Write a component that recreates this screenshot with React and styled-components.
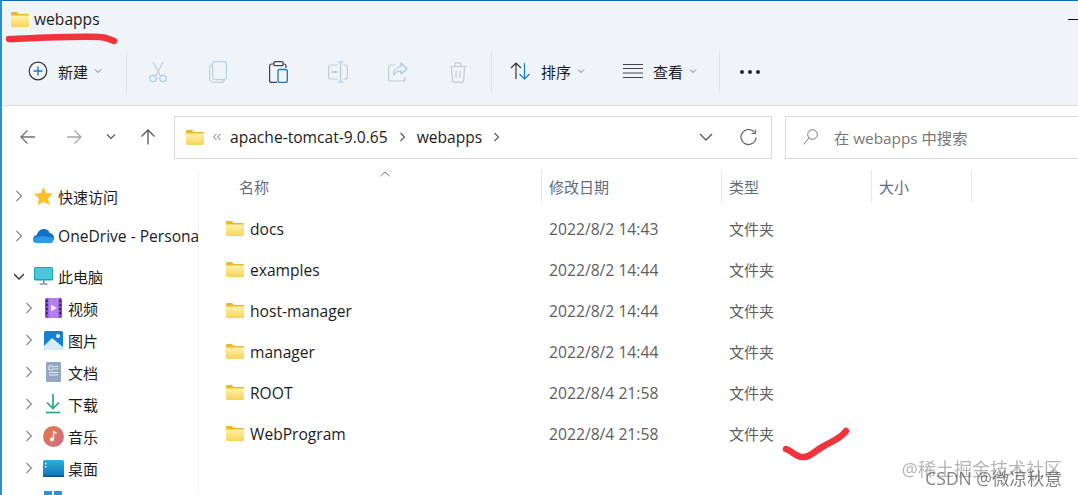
import React from 'react';
import styled, { createGlobalStyle } from 'styled-components';

const FONT = '"Open Sans", "Noto Sans CJK SC", sans-serif';

const GlobalStyle = createGlobalStyle`
  html, body {
    margin: 0;
    padding: 0;
    background: #fff;
    overflow: hidden;
  }
`;

const Window = styled.div`
  position: relative;
  width: 1078px;
  height: 495px;
  box-sizing: border-box;
  overflow: hidden;
  background: #fff;
  border-top: 1px solid #0f6cad;
  border-left: 2px solid #2b8fcb;
  font-family: ${FONT};
  font-size: 15.5px;
  color: #1c1c1c;
`;

const Head = styled.div`
  height: 104px;
  background: #eff4f9;
  border-bottom: 1px solid #d9d9d9;
  border-top-left-radius: 6px;
`;

const TitleBar = styled.div`
  height: 48px;
  display: flex;
  align-items: center;
  gap: 5px;
  padding: 0 0 12px 9px;
  box-sizing: border-box;
  font-size: 15.6px;
`;

const TitleText = styled.span`
  flex: 1;
`;

const Minimize = styled.span`
  width: 22px;
  height: 1px;
  background: #111;
  margin-right: -12px;
`;

const Ribbon = styled.div`
  height: 46px;
  display: flex;
  align-items: center;
`;

const RibbonDivider = styled.div`
  width: 1px;
  height: 41px;
  background: #dfe3e7;
`;

const ToolLabel = styled.button`
  display: flex;
  align-items: center;
  border: 0;
  padding: 0 0 2px;
  margin-left: ${p => p.$left}px;
  width: ${p => p.$width}px;
  background: none;
  font: inherit;
  font-size: 15px;
  color: #1c1c1c;
  gap: 10px;
`;

const ToolChevron = styled.svg`
  margin-left: -4px;
`;

const ToolIcon = styled.button`
  width: 60px;
  height: 40px;
  border: 0;
  padding: 0;
  background: none;
  display: flex;
  align-items: center;
  justify-content: center;
`;

const ToolGroup = styled.div`
  display: flex;
  margin: 0 3px 0 1px;
`;

const More = styled.div`
  display: flex;
  gap: 4px;
  margin-left: 20px;
`;

const Dot = styled.span`
  width: 4px;
  height: 4px;
  border-radius: 50%;
  background: #2a2a2a;
`;

const NavRow = styled.div`
  height: 64px;
  display: flex;
  align-items: center;
  padding-bottom: 2px;
  box-sizing: border-box;
`;

const NavButtons = styled.div`
  width: 172px;
  flex: none;
  display: flex;
  align-items: center;
`;

const NavButton = styled.button`
  width: ${p => p.$width}px;
  border: 0;
  padding: 0;
  background: none;
  display: flex;
  justify-content: center;
`;

const AddressBar = styled.div`
  width: 598px;
  flex: none;
  height: 43px;
  box-sizing: border-box;
  border: 1px solid #d9d9d9;
  display: flex;
  align-items: center;
  padding: 0 10px 0 11px;
  font-size: 15.6px;
`;

const Crumbs = styled.div`
  flex: 1;
  display: flex;
  align-items: center;
  gap: 9px;
`;

const Crumb = styled.span`
  color: #1c1c1c;
`;

const CrumbSepIcon = styled.svg`
  margin: 0 2px;
`;

const AddressActions = styled.div`
  display: flex;
  align-items: center;
  gap: 27px;
  padding-right: 4px;
`;

const SearchBox = styled.div`
  margin-left: 13px;
  width: 320px;
  flex: none;
  height: 43px;
  box-sizing: border-box;
  border: 1px solid #d9d9d9;
  display: flex;
  align-items: center;
  gap: 16px;
  padding-left: 17px;
  color: #767676;
  font-size: 15.3px;
`;

const Body = styled.div`
  display: flex;
  height: 330px;
`;

const Sidebar = styled.nav`
  width: 197px;
  flex: none;
  overflow: hidden;
  border-right: 1px solid #f1f1f1;
  padding-top: 10px;
  box-sizing: border-box;
  white-space: nowrap;
`;

const TreeRow = styled.div`
  height: 32px;
  margin-bottom: ${p => (p.$spaced ? 8 : 0)}px;
  display: flex;
  align-items: center;
  padding-left: ${p => (p.$nested ? 22 : 12)}px;
  font-size: 15px;
`;

const TreeLabel = styled.span`
  font-size: ${p => (p.$latin ? 15.6 : 15)}px;
`;

const TreeChevron = styled.svg`
  flex: none;
  width: 10px;
  height: 12px;
`;

const TreeIcon = styled.span`
  flex: none;
  width: 24px;
  height: 24px;
  margin-left: 7px;
  margin-right: 3px;
  display: flex;
  align-items: center;
  justify-content: center;
`;

const Files = styled.main`
  flex: 1;
`;

const Columns = styled.div`
  display: grid;
  grid-template-columns: 343px 180px 150px 100px;
  height: 33px;
  position: relative;
`;

const SortCaret = styled.svg`
  position: absolute;
  left: 181px;
  top: 1px;
`;

const ColumnHead = styled.div`
  padding-left: ${p => p.$pad}px;
  border-right: 1px solid #e6e6e6;
  display: flex;
  align-items: center;
  font-size: 15px;
  color: #5f6b7a;
`;

const FileList = styled.div`
  padding-top: 5px;
`;

const FileRow = styled.div`
  display: grid;
  grid-template-columns: 342px 180px 150px;
  height: 41px;
  align-items: center;
`;

const FileName = styled.div`
  display: flex;
  align-items: center;
  gap: 6px;
  padding-left: 27px;
  font-size: 15.6px;
`;

const FileMeta = styled.div`
  padding-left: 8px;
  font-size: ${p => p.$size}px;
  color: #5e5e5e;
`;

const Scribble = styled.svg`
  position: absolute;
  left: -2px;
  top: -1px;
  pointer-events: none;
`;

const Watermark = styled.div`
  position: absolute;
  right: 16px;
  bottom: ${p => p.$bottom}px;
  font-size: ${p => p.$size}px;
  color: ${p => p.$color};
  white-space: nowrap;
  filter: blur(0.4px);
`;

const Folder = ({ width = 18, height = 15 }) => (
  <svg width={width} height={height} viewBox="0 0 18 15">
    <defs>
      <linearGradient id="folderFront" x1="0" y1="0" x2="0" y2="1">
        <stop offset="0" stopColor="#fff2b0" />
        <stop offset="1" stopColor="#fbd257" />
      </linearGradient>
    </defs>
    <path d="M0 1.2C0 .5.5 0 1.2 0h4.6l2 2h9c.7 0 1.2.5 1.2 1.2V6H0z" fill="#eeb62c" />
    <path d="M0 3.4h18v10.4c0 .7-.5 1.2-1.2 1.2H1.2C.5 15 0 14.5 0 13.800z" fill="url(#folderFront)" />
  </svg>
);

const SmallChevron = () => (
  <ToolChevron width="8" height="6" viewBox="0 0 8 6">
    <path d="M1 1.500l3 3 3-3" fill="none" stroke="#777" strokeWidth="1" />
  </ToolChevron>
);

const NewIcon = () => (
  <svg width="20" height="20" viewBox="0 0 20 20">
    <circle cx="10" cy="10" r="8.800" fill="none" stroke="#333" strokeWidth="1.200" />
    <path d="M10 5.500v9M5.500 10h9" stroke="#1b78c2" strokeWidth="1.300" />
  </svg>
);

const CutIcon = () => (
  <svg width="20" height="22" viewBox="0 0 20 22">
    <path d="M5 1l7.500 14M15 1L7.500 15" fill="none" stroke="#c3ccd3" strokeWidth="1.200" />
    <circle cx="5" cy="17.500" r="3.200" fill="none" stroke="#a9c8e2" strokeWidth="1.200" />
    <circle cx="15" cy="17.500" r="3.200" fill="none" stroke="#a9c8e2" strokeWidth="1.200" />
  </svg>
);

const CopyIcon = () => (
  <svg width="18" height="22" viewBox="0 0 18 22">
    <rect x="3.600" y=".6" width="13.800" height="18" rx="2.500" fill="none" stroke="#b6d1e8" strokeWidth="1.200" />
    <path d="M3.600 3.500C1.600 4 .6 5 .6 7v10.500c0 2 1.600 3.900 3.900 3.900h8c1.500 0 2.500-1 3-2.800" fill="none" stroke="#c6ced5" strokeWidth="1.200" />
  </svg>
);

const PasteIcon = () => (
  <svg width="19" height="22" viewBox="0 0 19 22">
    <path d="M5 3H2.600C1.400 3 .6 3.800 .6 5v14.400c0 1.200.8 2 2 2H8M14 3h1c1.200 0 2 .8 2 2v2" fill="none" stroke="#444" strokeWidth="1.200" />
    <rect x="5" y=".7" width="9" height="4" rx="1" fill="none" stroke="#444" strokeWidth="1.200" />
    <rect x="9" y="8.500" width="9.300" height="13" rx="2" fill="none" stroke="#1b78c2" strokeWidth="1.300" />
  </svg>
);

const RenameIcon = () => (
  <svg width="20" height="22" viewBox="0 0 20 22">
    <path d="M10 4H2.500C1.400 4 .6 4.800 .6 6v10c0 1.200.8 2 1.900 2H10" fill="none" stroke="#c3ccd3" strokeWidth="1.200" />
    <path d="M15 4h2.500c1.100 0 1.900.8 1.900 2v10c0 1.200-.8 2-1.900 2H15" fill="none" stroke="#c3ccd3" strokeWidth="1.200" />
    <path d="M9.500 1h6M9.500 21h6M12.500 1v20" fill="none" stroke="#a9c8e2" strokeWidth="1.200" />
    <path d="M3.500 11h6" stroke="#b3b9bf" strokeWidth="1.400" />
  </svg>
);

const ShareIcon = () => (
  <svg width="20" height="20" viewBox="0 0 20 20">
    <path d="M7 3H3C1.600 3 .7 3.900 .7 5.300v11.400c0 1.400.9 2.300 2.300 2.300h11.500c1.400 0 2.300-.9 2.300-2.300V15" fill="none" stroke="#c3ccd3" strokeWidth="1.200" />
    <path d="M13 1l6 5.500-6 5.500V9c-4 0-6 1.500-7.500 4 0-5 3-8 7.500-8.500z" fill="none" stroke="#a9c8e2" strokeWidth="1.200" strokeLinejoin="round" />
  </svg>
);

const TrashIcon = () => (
  <svg width="18" height="21" viewBox="0 0 18 21">
    <path d="M.5 4.500h17M6 4V2.500C6 1.500 6.800.8 7.800.8h2.400c1 0 1.800.7 1.800 1.700V4M2.500 4.500l.8 13.500c.1 1.400 1 2.300 2.400 2.300h6.600c1.400 0 2.300-.9 2.400-2.300l.8-13.500" fill="none" stroke="#c5cbd0" strokeWidth="1.200" />
    <path d="M7 9v7M11 9v7" stroke="#c5cbd0" strokeWidth="1.200" />
  </svg>
);

const SortIcon = () => (
  <svg width="21" height="18" viewBox="0 0 21 18">
    <path d="M6 17V1M1 6l5-5 5 5" fill="none" stroke="#333" strokeWidth="1.200" />
    <path d="M14.500 1v16M9.500 12l5 5 5-5" fill="none" stroke="#1b78c2" strokeWidth="1.200" />
  </svg>
);

const ViewIcon = () => (
  <svg width="20" height="14" viewBox="0 0 20 14">
    <path d="M0 .5h20M0 4.500h20M0 9h20M0 13.500h20" stroke="#444" strokeWidth="1" />
  </svg>
);

const Arrow = ({ dir, color }) => (
  <svg width="16" height="16" viewBox="0 0 16 16">
    {dir === 'left' && <path d="M15 8H1M7.500 1.500L1 8l6.500 6.500" fill="none" stroke={color} strokeWidth="1.300" />}
    {dir === 'right' && <path d="M1 8h14M8.500 1.500L15 8l-6.500 6.500" fill="none" stroke={color} strokeWidth="1.300" />}
    {dir === 'up' && <path d="M8 15.500V1M1.500 7.500L8 1l6.500 6.500" fill="none" stroke={color} strokeWidth="1.300" />}
  </svg>
);

const Chevron = ({ color = '#8a8a8a', open }) => (
  <TreeChevron viewBox="0 0 10 12">
    {open
      ? <path d="M0 4l5 5 5-5" fill="none" stroke="#333" strokeWidth="1.300" />
      : <path d="M2.500 1l5 5-5 5" fill="none" stroke={color} strokeWidth="1.300" />}
  </TreeChevron>
);

const CrumbSep = () => (
  <CrumbSepIcon width="7" height="10" viewBox="0 0 7 10">
    <path d="M1.500 1l4 4-4 4" fill="none" stroke="#555" strokeWidth="1.100" />
  </CrumbSepIcon>
);

const DoubleSep = () => (
  <svg width="8" height="8" viewBox="0 0 8 8">
    <path d="M3.500 1l-3 3 3 3M7.500 1l-3 3 3 3" fill="none" stroke="#777" strokeWidth="1" />
  </svg>
);

const StarIcon = () => (
  <svg width="19" height="18" viewBox="0 0 19 18">
    <path d="M9.500 0l2.800 6 6.700.8-4.900 4.600 1.300 6.600-5.900-3.300L3.600 18l1.300-6.600L0 6.800 6.700 6z" fill="#fbc02d" />
  </svg>
);

const CloudIcon = () => (
  <svg width="21" height="14" viewBox="0 0 21 14">
    <path d="M4 14C1.500 14 0 12.300 0 10.200 0 8 1.600 6.400 3.600 6.300 4.600 2.600 7.500 0 10.800 0c2.800 0 5 1.600 6 3.900 2.400.2 4.200 2.100 4.200 4.800 0 3-2 5.300-4.800 5.300z" fill="#0f72c9" />
    <path d="M4 14C1.500 14 0 12.300 0 10.200 3 7 8 6 21 9c-.3 3-2.200 5-4.800 5z" fill="#2a9be6" />
  </svg>
);

const PcIcon = () => (
  <svg width="19" height="18" viewBox="0 0 19 18">
    <rect x="0" y="0" width="19" height="13.500" rx="1.500" fill="#19a0bd" />
    <rect x="1" y="1" width="17" height="11" fill="#4cc6d8" />
    <path d="M9 13.500h1.500V16H9z" fill="#507f8e" />
    <path d="M5.500 16.500h8v1h-8z" fill="#3c6675" />
  </svg>
);

const VideoIcon = () => (
  <svg width="17" height="20" viewBox="0 0 17 20">
    <rect width="17" height="20" rx="1.500" fill="#8b48d8" />
    <rect x="3.500" y="0" width="10" height="20" fill="#b481ec" />
    <path d="M6 6.500l6 3.500-6 3.500z" fill="#f6eeff" />
    <path d="M1 2h1.500v2H1zM1 6h1.500v2H1zM1 10h1.500v2H1zM1 14h1.500v2H1zM14.500 2H16v2h-1.500zM14.500 6H16v2h-1.500zM14.500 10H16v2h-1.500zM14.500 14H16v2h-1.500z" fill="#2f1360" />
  </svg>
);

const PictureIcon = () => (
  <svg width="19" height="19" viewBox="0 0 19 19">
    <rect width="19" height="19" rx="1.500" fill="#1680d6" />
    <path d="M0 15l8-8 11 9v1.500c0 .8-.7 1.500-1.500 1.500h-16C.7 19 0 18.300 0 17.500z" fill="#d6ecfb" />
    <circle cx="14" cy="5" r="2" fill="#e6f4fd" />
  </svg>
);

const DocIcon = () => (
  <svg width="15" height="20" viewBox="0 0 15 20">
    <rect width="15" height="20" rx="1" fill="#93a7c2" />
    <path d="M3 4h4v4H3zM8.500 4.500H12M8.500 7H12M3 10.500h9M3 13h9" stroke="#e9eef4" strokeWidth="1" fill="none" />
  </svg>
);

const DownloadIcon = () => (
  <svg width="16" height="20" viewBox="0 0 16 20">
    <path d="M8 0v14M2 8.500L8 14.500l6-6" fill="none" stroke="#23ab83" strokeWidth="1.700" />
    <path d="M1 18.500h14" stroke="#23ab83" strokeWidth="1.700" />
  </svg>
);

const MusicIcon = () => (
  <svg width="21" height="21" viewBox="0 0 21 21">
    <defs>
      <linearGradient id="musicFill" x1="0" y1="0" x2="1" y2="1">
        <stop offset="0" stopColor="#ea7a3f" />
        <stop offset="1" stopColor="#c96a92" />
      </linearGradient>
    </defs>
    <circle cx="10.500" cy="10.500" r="10.500" fill="url(#musicFill)" />
    <path d="M10.500 5v8" stroke="#fff" strokeWidth="1.400" />
    <path d="M10.500 5c1 1.500 2.500 1.800 3 2.800" stroke="#fff" strokeWidth="1.400" fill="none" />
    <circle cx="8.800" cy="13.500" r="2" fill="#fff" />
  </svg>
);

const DesktopIcon = () => (
  <svg width="21" height="17" viewBox="0 0 21 17">
    <defs>
      <linearGradient id="deskFill" x1="0" y1="0" x2="0" y2="1">
        <stop offset="0" stopColor="#2cb2d8" />
        <stop offset="1" stopColor="#0d74b9" />
      </linearGradient>
    </defs>
    <rect width="21" height="17" rx="1.500" fill="url(#deskFill)" />
    <path d="M2 3h1.500v1.500H2zM2 6h1.500v1.500H2z" fill="#d5f3fb" />
    <path d="M0 15.500h21V17H0z" fill="#0a568f" />
  </svg>
);

const WindowsIcon = () => (
  <svg width="18" height="18" viewBox="0 0 18 18">
    <path d="M0 0h8v8H0zM10 0h8v8h-8zM0 10h8v8H0zM10 10h8v8h-8z" fill="#2a93d5" />
  </svg>
);

const tools = [CutIcon, CopyIcon, PasteIcon, RenameIcon, ShareIcon, TrashIcon];

const tree = [
  { label: '快速访问', icon: <StarIcon />, spaced: true },
  { label: 'OneDrive - Personal', icon: <CloudIcon />, spaced: true, latin: true },
  { label: '此电脑', icon: <PcIcon />, open: true },
  { label: '视频', icon: <VideoIcon />, nested: true },
  { label: '图片', icon: <PictureIcon />, nested: true },
  { label: '文档', icon: <DocIcon />, nested: true },
  { label: '下载', icon: <DownloadIcon />, nested: true },
  { label: '音乐', icon: <MusicIcon />, nested: true },
  { label: '桌面', icon: <DesktopIcon />, nested: true },
  { label: '', icon: <WindowsIcon />, nested: true },
];

const files = [
  { name: 'docs', date: '2022/8/2 14:43' },
  { name: 'examples', date: '2022/8/2 14:44' },
  { name: 'host-manager', date: '2022/8/2 14:44' },
  { name: 'manager', date: '2022/8/2 14:44' },
  { name: 'ROOT', date: '2022/8/4 21:58' },
  { name: 'WebProgram', date: '2022/8/4 21:58' },
];

const App = () => (
  <Window>
    <GlobalStyle />
    <Head>
      <TitleBar>
        <Folder />
        <TitleText>webapps</TitleText>
        <Minimize />
      </TitleBar>
      <Ribbon>
        <ToolLabel $left={26} $width={98}>
          <NewIcon />
          新建
          <SmallChevron />
        </ToolLabel>
        <RibbonDivider />
        <ToolGroup>
          {tools.map((Tool, i) => (
            <ToolIcon key={i}><Tool /></ToolIcon>
          ))}
        </ToolGroup>
        <RibbonDivider />
        <ToolLabel $left={18} $width={115}>
          <SortIcon />
          排序
          <SmallChevron />
        </ToolLabel>
        <ToolLabel $left={-2} $width={96}>
          <ViewIcon />
          查看
          <SmallChevron />
        </ToolLabel>
        <RibbonDivider />
        <More>
          <Dot /><Dot /><Dot />
        </More>
      </Ribbon>
    </Head>
    <NavRow>
      <NavButtons>
        <NavButton $width={52}><Arrow dir="left" color="#6f6f6f" /></NavButton>
        <NavButton $width={40}><Arrow dir="right" color="#a8a8a8" /></NavButton>
        <NavButton $width={34}>
          <svg width="10" height="8" viewBox="0 0 10 8">
            <path d="M1 1.500l4 4 4-4" fill="none" stroke="#555" strokeWidth="1.200" />
          </svg>
        </NavButton>
        <NavButton $width={40}><Arrow dir="up" color="#555" /></NavButton>
      </NavButtons>
      <AddressBar>
        <Crumbs>
          <Folder />
          <DoubleSep />
          <Crumb>apache-tomcat-9.0.65</Crumb>
          <CrumbSep />
          <Crumb>webapps</Crumb>
          <CrumbSep />
        </Crumbs>
        <AddressActions>
          <svg width="14" height="8" viewBox="0 0 14 8">
            <path d="M1 1l6 6 6-6" fill="none" stroke="#555" strokeWidth="1.300" />
          </svg>
          <svg width="17" height="17" viewBox="0 0 17 17">
            <path d="M14.500 3.500A7.500 7.500 0 1 0 16 8.500" fill="none" stroke="#666" strokeWidth="1.200" />
            <path d="M15.500 .5v4h-4" fill="none" stroke="#666" strokeWidth="1.200" />
          </svg>
        </AddressActions>
      </AddressBar>
      <SearchBox>
        <svg width="15" height="16" viewBox="0 0 15 16">
          <circle cx="9.500" cy="5.500" r="4.800" fill="none" stroke="#777" strokeWidth="1" />
          <path d="M6 9L.7 15.300" stroke="#777" strokeWidth="1" />
        </svg>
        在 webapps 中搜索
      </SearchBox>
    </NavRow>
    <Body>
      <Sidebar>
        {tree.map(row => (
          <TreeRow key={row.label} $nested={row.nested} $spaced={row.spaced}>
            <Chevron open={row.open} />
            <TreeIcon>{row.icon}</TreeIcon>
            <TreeLabel $latin={row.latin}>{row.label}</TreeLabel>
          </TreeRow>
        ))}
      </Sidebar>
      <Files>
        <Columns>
          <SortCaret width="10" height="6" viewBox="0 0 10 6">
            <path d="M.5 5L5 1l4.500 4" fill="none" stroke="#777" strokeWidth="1" />
          </SortCaret>
          <ColumnHead $pad={40}>名称</ColumnHead>
          <ColumnHead $pad={7}>修改日期</ColumnHead>
          <ColumnHead $pad={7}>类型</ColumnHead>
          <ColumnHead $pad={7}>大小</ColumnHead>
        </Columns>
        <FileList>
          {files.map(file => (
            <FileRow key={file.name}>
              <FileName><Folder />{file.name}</FileName>
              <FileMeta $size={15.7}>{file.date}</FileMeta>
              <FileMeta $size={15}>文件夹</FileMeta>
            </FileRow>
          ))}
        </FileList>
      </Files>
    </Body>
    <Scribble width="1078" height="495" viewBox="0 0 1078 495">
      <path d="M9 39c30-1 68-3 90-2 6 0 10 2 15 4" fill="none" stroke="#f2333b" strokeWidth="6.500" strokeLinecap="round" />
      <path d="M786 449c6 2 10 8 16 8 8 1 12-6 22-11 8-5 16-7 22-15" fill="none" stroke="#f2333b" strokeWidth="6.500" strokeLinecap="round" strokeLinejoin="round" />
    </Scribble>
    <Watermark $bottom={14} $size={18} $color="rgba(120,120,120,.55)">@稀土掘金技术社区</Watermark>
    <Watermark $bottom={5} $size={17.5} $color="rgba(90,90,90,.75)">CSDN @微凉秋意</Watermark>
  </Window>
);

export default App;
